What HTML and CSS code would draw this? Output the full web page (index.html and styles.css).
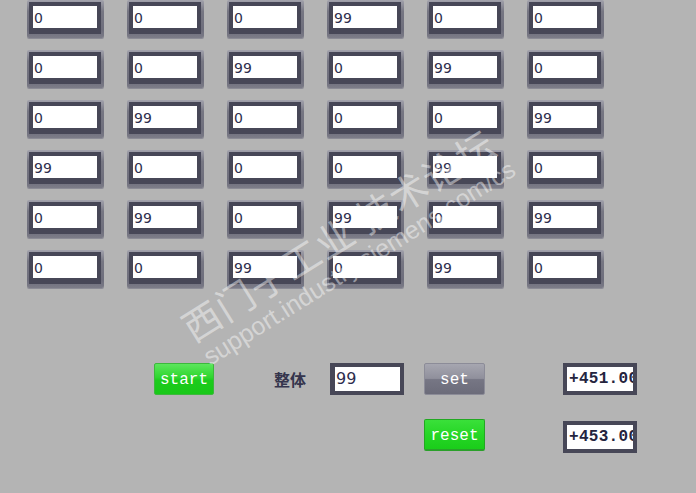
FILE: index.html
```html
<!DOCTYPE html>
<html>
<head>
    <title>Panel</title>
    <link rel="stylesheet" href="styles.css">
</head>
<body>
    <div class="screen">
        <div class="grid">
            <div class="cell"><div class="field">0</div></div>
            <div class="cell"><div class="field">0</div></div>
            <div class="cell"><div class="field">0</div></div>
            <div class="cell"><div class="field">99</div></div>
            <div class="cell"><div class="field">0</div></div>
            <div class="cell"><div class="field">0</div></div>

            <div class="cell"><div class="field">0</div></div>
            <div class="cell"><div class="field">0</div></div>
            <div class="cell"><div class="field">99</div></div>
            <div class="cell"><div class="field">0</div></div>
            <div class="cell"><div class="field">99</div></div>
            <div class="cell"><div class="field">0</div></div>

            <div class="cell"><div class="field">0</div></div>
            <div class="cell"><div class="field">99</div></div>
            <div class="cell"><div class="field">0</div></div>
            <div class="cell"><div class="field">0</div></div>
            <div class="cell"><div class="field">0</div></div>
            <div class="cell"><div class="field">99</div></div>

            <div class="cell"><div class="field">99</div></div>
            <div class="cell"><div class="field">0</div></div>
            <div class="cell"><div class="field">0</div></div>
            <div class="cell"><div class="field">0</div></div>
            <div class="cell"><div class="field">99</div></div>
            <div class="cell"><div class="field">0</div></div>

            <div class="cell"><div class="field">0</div></div>
            <div class="cell"><div class="field">99</div></div>
            <div class="cell"><div class="field">0</div></div>
            <div class="cell"><div class="field">99</div></div>
            <div class="cell"><div class="field">0</div></div>
            <div class="cell"><div class="field">99</div></div>

            <div class="cell"><div class="field">0</div></div>
            <div class="cell"><div class="field">0</div></div>
            <div class="cell"><div class="field">99</div></div>
            <div class="cell"><div class="field">0</div></div>
            <div class="cell"><div class="field">99</div></div>
            <div class="cell"><div class="field">0</div></div>
        </div>

        <div class="controls">
            <div class="row">
                <div class="btn green start-btn">start</div>
                <div class="label">整体</div>
                <div class="entry">99</div>
                <div class="btn grey set-btn">set</div>
                <div class="display">+451.00</div>
            </div>
            <div class="row second">
                <div class="btn green reset-btn">reset</div>
                <div class="display">+453.00</div>
            </div>
        </div>

        <div class="watermark">
            <div class="wm-cn">西门子工业 技术论坛</div>
            <div class="wm-url">support.industry.siemens.com/cs</div>
        </div>
    </div>
</body>
</html>
```

FILE: styles.css
```css
body { margin: 0; background: #b4b4b4; font-family: "DejaVu Sans", sans-serif; overflow: hidden; }
.screen { position: relative; width: 696px; height: 493px; }

.grid { display: grid; grid-template-columns: repeat(6, 77px); column-gap: 23px; row-gap: 12px; padding-left: 27px; }
.cell { box-sizing: border-box; height: 38px; padding: 2px 3px 4px 2px; border-radius: 2px; background: linear-gradient(#a2a2ac, #767682 30%, #6e6e7c 80%, #7c7c88); box-shadow: 0 1px 0 #8c8c96; }
.field { border: solid #474757; border-width: 4px 4px 6px 4px; background: #fff; color: #2e2e4e; font-size: 14px; line-height: 22px; padding-left: 1px; padding-top: 1px; height: 21px; }

.controls { display: flex; flex-direction: column; gap: 24px; margin-top: 75px; padding-left: 154px; }
.row { display: flex; align-items: center; height: 32px; }
.row.second { padding-left: 270px; }

.btn { box-sizing: border-box; width: 61px; height: 32px; padding-top: 2px; border-radius: 2px; color: #fff; font-family: "Liberation Mono", monospace; font-size: 16px; line-height: 28px; text-align: center; }
.green { border: 1px solid #3cb83c; background: linear-gradient(#5ce65c, #2ed62e 45%, #1ccb1c 55%, #18c818); }
.reset-btn { border-color: #22a822; background: linear-gradient(#3ae03a, #26d626 50%, #1acd1a); border-bottom: 2px solid #2aa02a; }
.grey { border: 1px solid #8c8c98; background: linear-gradient(#a6a6b0, #90909c 48%, #767684 52%, #6c6c7a); }
.start-btn { width: 60px; }

.label { margin-left: 60px; width: 56px; font-family: "Noto Sans CJK SC", sans-serif; font-weight: bold; font-size: 16px; color: #35354d; }
.entry { box-sizing: border-box; width: 74px; height: 32px; border: solid #474757; border-width: 4px 4px 4px 5px; background: #fff; color: #2e2e4e; font-size: 16px; line-height: 24px; padding-left: 1px; }
.set-btn { margin-left: 20px; }

.display { box-sizing: border-box; width: 74px; height: 32px; margin-left: 78px; border: 4px solid #474757; background: #fff; color: #24243e; font-family: "Liberation Mono", monospace; font-weight: bold; font-size: 16px; letter-spacing: 0.3px; line-height: 24px; white-space: nowrap; overflow: hidden; padding-left: 2px; }
.second .display { margin-top: 4px; }

.watermark { position: absolute; left: 174px; top: 312px; transform-origin: left top; transform: rotate(-32deg); color: rgba(255, 255, 255, 0.45); pointer-events: none; }
.wm-cn { font-family: "Noto Sans CJK SC", sans-serif; font-size: 38px; line-height: 42px; letter-spacing: 1px; }
.wm-url { font-family: "Liberation Sans", sans-serif; font-size: 25px; line-height: 28px; margin-left: 2px; }
```
